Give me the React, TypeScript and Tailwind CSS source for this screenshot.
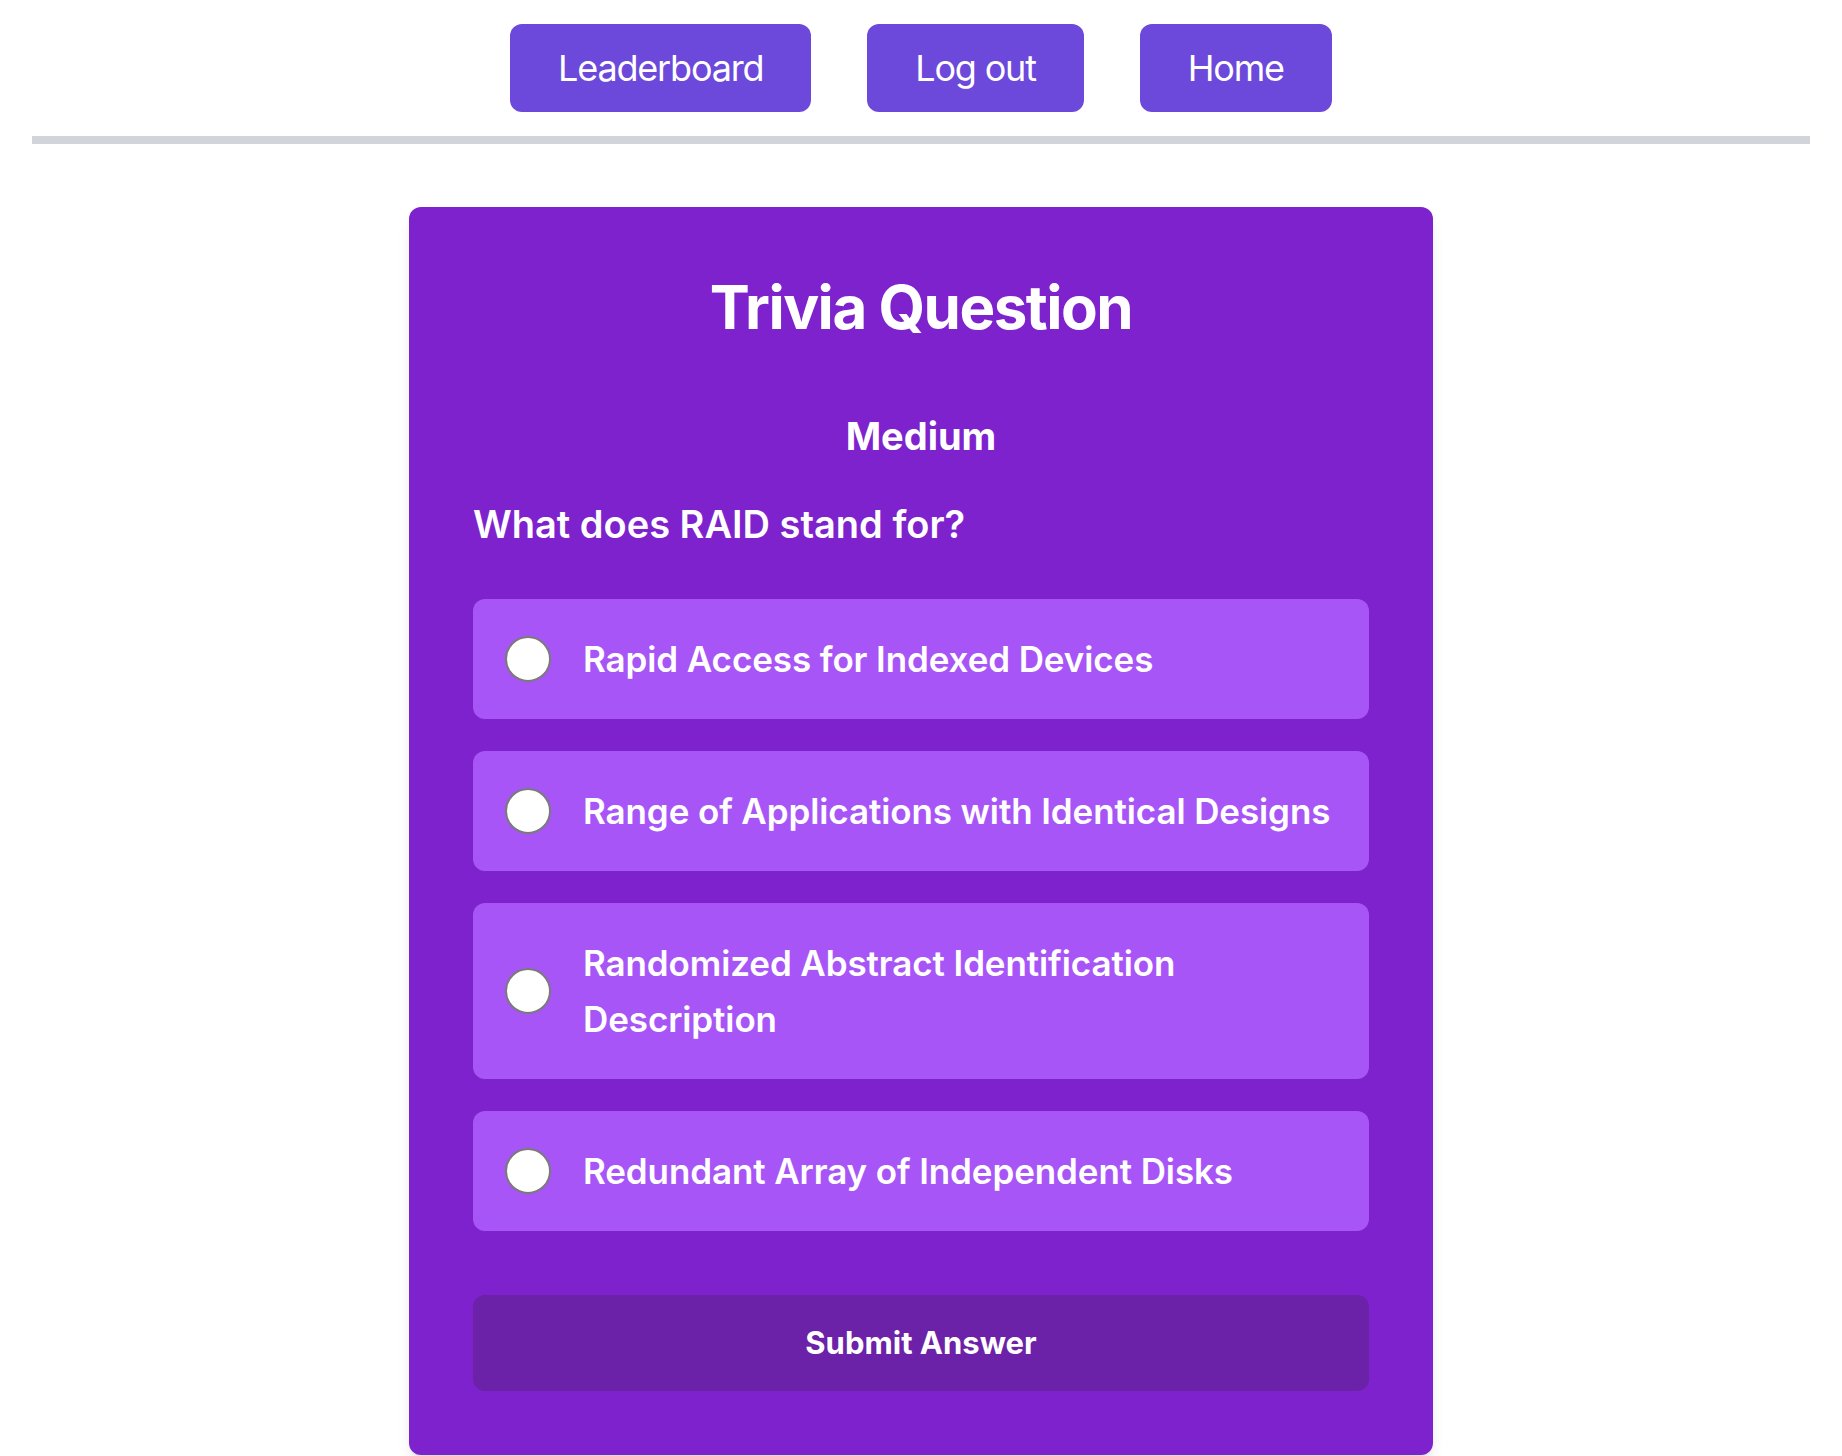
const answers = [
  "Rapid Access for Indexed Devices",
  "Range of Applications with Identical Designs",
  "Randomized Abstract Identification Description",
  "Redundant Array of Independent Disks",
];

function NavButton({ label }: { label: string }) {
  return (
    <button className="h-[88px] rounded-xl bg-[#6c48db] px-12 text-[36px] leading-[40px] tracking-[-0.033em] text-white">
      {label}
    </button>
  );
}

function AnswerOption({ text }: { text: string }) {
  return (
    <label className="flex items-center rounded-xl bg-[#a855f7] py-8 pr-6 pl-8 text-[35px] leading-[56px] font-semibold tracking-[-0.003em] text-white">
      <span className="h-[46px] w-[46px] shrink-0 rounded-full border-2 border-[#7a7a7a] bg-white" />
      <span className="ml-8">{text}</span>
    </label>
  );
}

export default function App() {
  return (
    <div className="min-h-screen bg-white font-['Inter',sans-serif]">
      <nav className="mx-8 flex justify-center gap-14 border-b-8 border-[#d1d5db] py-6">
        <NavButton label="Leaderboard" />
        <NavButton label="Log out" />
        <NavButton label="Home" />
      </nav>

      <main className="flex justify-center pt-[63px]">
        <div className="w-[1024px] rounded-xl bg-[#7e22ce] p-16 text-white shadow-lg">
          <h1 className="text-center text-[60px] leading-[72px] font-bold tracking-tight">Trivia Question</h1>
          <h2 className="mt-[65px] text-center text-[38px] leading-[56px] font-bold">Medium</h2>
          <p className="mt-[32px] text-[38px] leading-[56px] font-semibold">What does RAID stand for?</p>

          <div className="mt-[47px] flex flex-col gap-8">
            {answers.map((a) => (
              <AnswerOption key={a} text={a} />
            ))}
          </div>

          <button className="mt-16 w-full rounded-xl bg-[#6b21a8] py-7 text-[31px] leading-[40px] font-bold text-white">
            Submit Answer
          </button>
        </div>
      </main>
    </div>
  );
}
